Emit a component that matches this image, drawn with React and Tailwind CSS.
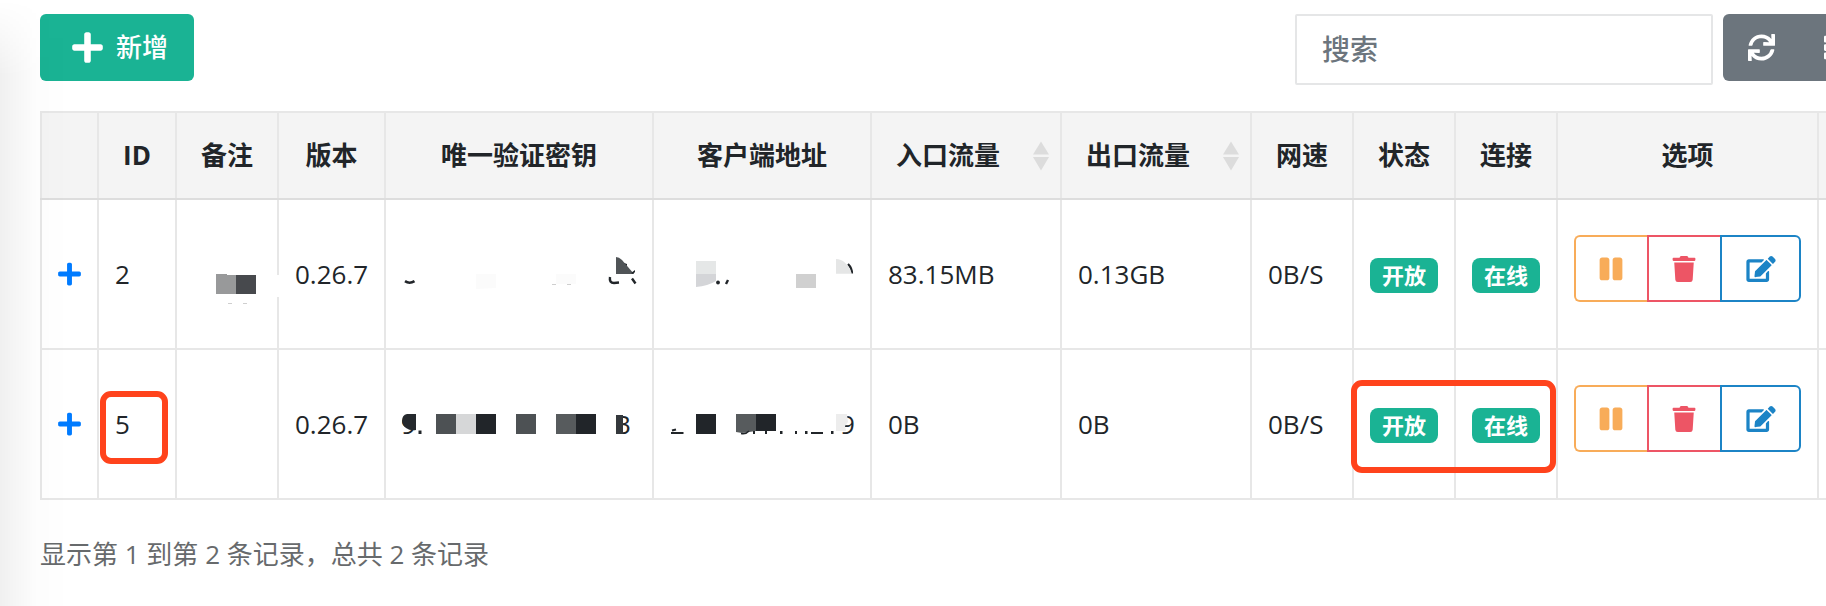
import React from "react";
import { FaPlus, FaSync, FaPause, FaTrash, FaEdit, FaThList } from "react-icons/fa";

const COLS =
  "grid grid-cols-[57px_78px_102px_107px_268px_218px_190px_190px_102px_102px_102px_261px_9px]";

const HEADERS = [
  { label: "" },
  { label: "ID" },
  { label: "备注" },
  { label: "版本" },
  { label: "唯一验证密钥" },
  { label: "客户端地址" },
  { label: "入口流量", sortable: true },
  { label: "出口流量", sortable: true },
  { label: "网速" },
  { label: "状态" },
  { label: "连接" },
  { label: "选项" },
  { label: "" },
];

function SortIcon() {
  return (
    <svg className="h-[30px] w-[18px]" viewBox="0 0 18 30" fill="#dcdcdc">
      <path d="M9 0.5 17 13.5H1z" />
      <path d="M9 29.5 17 16H1z" />
    </svg>
  );
}

function HeaderCell({ label, sortable }) {
  if (sortable) {
    return (
      <div className="flex items-center justify-between border-l-2 border-[#e7e7e7] pr-[10px] pl-6">
        {label}
        <SortIcon />
      </div>
    );
  }
  return (
    <div className="flex items-center justify-center border-l-2 border-[#e7e7e7]">{label}</div>
  );
}

function Cell({ children, className = "px-4" }) {
  return (
    <div className={`flex items-center border-l-2 border-[#e7e7e7] ${className}`}>{children}</div>
  );
}

function Badge({ children }) {
  return (
    <span className="mt-[3px] flex h-[35px] w-[68px] items-center justify-center rounded-lg bg-[#1ab394] pb-px text-[22px] leading-none font-bold text-white">
      {children}
    </span>
  );
}

function Actions() {
  return (
    <div className="-mt-[11px] flex h-[67px]">
      <button className="flex w-[75px] items-center justify-center rounded-l-md border-2 border-r-0 border-[#f8ac59] pr-1 text-[#f8ac59]">
        <FaPause className="h-[26px] w-[24px]" />
      </button>
      <button className="-ml-0.5 flex w-[75px] items-center justify-center border-2 border-r-0 border-[#ed5565] pr-1 text-[#ed5565]">
        <FaTrash className="h-[26px] w-[24px]" />
      </button>
      <button className="-ml-0.5 flex w-[81px] items-center justify-center rounded-r-md border-2 border-[#1c84c6] text-[#1c84c6]">
        <FaEdit className="h-[26px] w-[30px]" />
      </button>
    </div>
  );
}

const GLYPH = "font-['Open_Sans',sans-serif] text-[26px]";

function NoteMosaic() {
  return (
    <svg className="relative h-[148px] w-[102px] shrink-0" viewBox="177 200 102 148">
      <path d="M216 274h11v1h9v19h-20z" fill="#98999a" />
      <path d="M236 275h20v19h-20z" fill="#47494d" />
      <path d="M228 303h4v1h-4zM243 303h4v1h-4z" fill="#cfcfcf" />
      <path d="M272 275h7v22h-7z" fill="#fff" />
    </svg>
  );
}

function KeyMosaicA() {
  return (
    <svg className="h-[148px] w-[266px]" viewBox="386 200 266 148">
      <path d="M476 274h20v14l-20 1z" fill="#fbfbfb" />
      <path d="M556 274h20v10h-20z" fill="#fbfbfb" />
      <path d="M552 284h4v1h-4zM567 284h4v1h-4z" fill="#cfcfcf" />
      <path d="M405 281.2q4.5 3 9.500 0" fill="none" stroke="#212529" strokeWidth="2.600" />
      <path d="M616 257q3 0 6 3l12 14h-18z" fill="#505457" />
      <path d="M624 263l3 3v-2zM631 273l4-3v2l-2 2z" fill="#212529" />
      <path d="M610 277q-1 6 4 6l5-.5M632 278.500l3.500 5" fill="none" stroke="#212529" strokeWidth="2.400" />
    </svg>
  );
}

function AddressMosaicA() {
  return (
    <svg className="h-[148px] w-[216px]" viewBox="654 200 216 148">
      <path d="M696 261h20v13h-20z" fill="#e5e7e7" />
      <path d="M696 274h20v7q-8 5-20 6z" fill="#d4d5d8" />
      <circle cx="718" cy="282.500" r="1.900" fill="#212529" />
      <path d="M728 280l-2 4" stroke="#212529" strokeWidth="2.400" />
      <path d="M796 274h20v14h-20z" fill="#d0d0d0" />
      <path d="M848 264q4 4 4 9.500" fill="none" stroke="#212529" strokeWidth="2.200" />
      <path d="M836 259q10 0 16 14.700h-16z" fill="#e5e6e6" />
    </svg>
  );
}

function KeyMosaicB() {
  return (
    <svg className="h-[148px] w-[266px]" viewBox="386 350 266 148">
      <clipPath id="nine">
        <path d="M400 410h16v26h-16z" />
      </clipPath>
      <text x="401" y="434" fill="#212529" className={GLYPH} clipPath="url(#nine)">9</text>
      <path d="M416 414v16q-6 1-10-2-4-3-4-7 0-6 5-7z" fill="#25292d" />
      <path d="M418.500 430.500h3v3.500h-3z" fill="#212529" />
      <path d="M436 414h20v20h-20zM516 414h20v20h-20z" fill="#4d5154" />
      <path d="M456 414h20v20h-20z" fill="#d6d7d8" />
      <path d="M476 414h20v20h-20zM576 414h20v20h-20z" fill="#212529" />
      <path d="M556 414h20v20h-20z" fill="#575b5d" />
      <text x="614" y="434" fill="#212529" className={GLYPH}>B</text>
      <path d="M616 415h7v19h-7z" fill="#34383c" />
    </svg>
  );
}

function AddressMosaicB() {
  return (
    <svg className="h-[148px] w-[216px]" viewBox="654 350 216 148">
      <path d="M672 430.500l4-1M671 433h12.500" stroke="#212529" strokeWidth="2.200" />
      <path d="M696 414h20v20h-20zM756 414h20v17h-20z" fill="#212529" />
      <path d="M736 414h20v17l-14 2-6-1z" fill="#575b5d" />
      <path d="M741 433.500q5 1 8-2.500" fill="none" stroke="#212529" strokeWidth="1.400" />
      <path d="M753 431h2v3h-2zM765 431h2v3h-2zM780 431h2.500v3h-2.500zM795 431h2v3h-2zM805 431h2.500v3h-2.500zM811 432h12v2h-12zM831 431h2.500v3h-2.500z" fill="#212529" />
      <text x="840" y="434" fill="#212529" className={GLYPH}>9</text>
      <path d="M836 414h11l1 8-3 4 1 5h-10z" fill="#ededed" />
    </svg>
  );
}

function Row({ id, note, version, secret, address, inflow, outflow, children }) {
  return (
    <div className={`relative h-[150px] border-b-2 border-[#e7e7e7] ${COLS}`}>
      <Cell className="justify-center">
        <FaPlus className="h-[26px] w-[23px] text-[#007bff]" />
      </Cell>
      <Cell>{id}</Cell>
      <Cell className="">{note}</Cell>
      <Cell>{version}</Cell>
      <Cell className="">{secret}</Cell>
      <Cell className="">{address}</Cell>
      <Cell>{inflow}</Cell>
      <Cell>{outflow}</Cell>
      <Cell>0B/S</Cell>
      <Cell>
        <Badge>开放</Badge>
      </Cell>
      <Cell>
        <Badge>在线</Badge>
      </Cell>
      <Cell>
        <Actions />
      </Cell>
      <Cell className="" />
      {children}
    </div>
  );
}

export default function App() {
  return (
    <div className="relative h-[606px] w-[1826px] overflow-hidden bg-white pt-[14px] pl-10 font-['Open_Sans','Noto_Sans_CJK_SC',sans-serif] text-[26px] leading-[39px] text-[#212529]">
      <div className="flex h-[97px] items-start">
        <button className="flex h-[67px] w-[154px] shrink-0 items-center rounded-md bg-[#1ab394] pl-8 text-white">
          <FaPlus className="h-[35px] w-[31px]" />
          <span className="ml-[13px] font-medium">新增</span>
        </button>
        <div className="ml-[1101px] flex h-[71px] w-[418px] shrink-0 items-center rounded-[2px] border-2 border-[#e5e6e7] pl-[25px] text-[28px] font-medium text-[#6c757d]">
          搜索
        </div>
        <div className="ml-[10px] flex h-[67px] w-[160px] shrink-0 items-center rounded-l-md bg-[#6c757d] pl-[25px] text-white">
          <FaSync className="-mt-px h-[27px] w-[27px]" />
          <FaThList className="ml-[49px] h-[27px] w-[27px]" />
        </div>
      </div>

      <div className="w-[1786px] overflow-hidden">
        <div className={`h-[89px] border-t-2 border-b-2 border-t-[#e7e7e7] border-b-[#dddddd] bg-[#f4f4f4] font-bold ${COLS}`}>
          {HEADERS.map((h, i) => (
            <HeaderCell key={i} {...h} />
          ))}
        </div>
        <Row
          id="2"
          note={<NoteMosaic />}
          version="0.26.7"
          secret={<KeyMosaicA />}
          address={<AddressMosaicA />}
          inflow="83.15MB"
          outflow="0.13GB"
        />
        <Row
          id="5"
          version="0.26.7"
          secret={<KeyMosaicB />}
          address={<AddressMosaicB />}
          inflow="0B"
          outflow="0B"
        >
          <div className="absolute top-[41px] left-[60px] h-[73px] w-[68px] rounded-[11px] border-6 border-[#ff431c]" />
          <div className="absolute top-[30px] left-[1311px] h-[93px] w-[205px] rounded-[11px] border-6 border-[#ff431c]" />
        </Row>
      </div>

      <div className="mt-[35px] text-[#676a6c]">显示第 1 到第 2 条记录，总共 2 条记录</div>

      <div className="pointer-events-none absolute inset-y-0 left-0 w-[70px] bg-linear-to-r from-black/6 via-black/1 to-transparent mask-t-from-[530px] mask-t-to-[606px]" />
    </div>
  );
}
